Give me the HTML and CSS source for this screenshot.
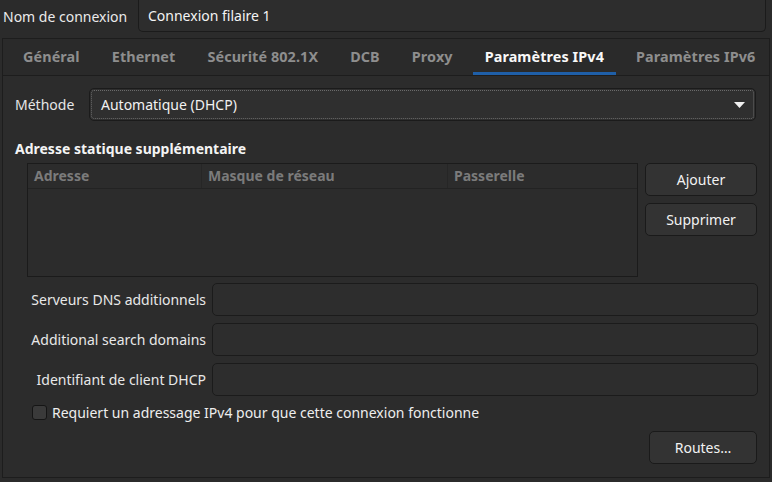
FILE: index.html
```html
<!DOCTYPE html>
<html lang="fr">
<head>
<meta charset="utf-8">
<link rel="stylesheet" href="styles.css">
</head>
<body>
<div class="top">
  <span class="top-label">Nom de connexion</span>
  <div class="top-entry">Connexion filaire 1</div>
</div>
<div class="notebook">
  <div class="tabs">
    <div class="tab">Général</div>
    <div class="tab">Ethernet</div>
    <div class="tab">Sécurité 802.1X</div>
    <div class="tab">DCB</div>
    <div class="tab">Proxy</div>
    <div class="tab active">Paramètres IPv4</div>
    <div class="tab">Paramètres IPv6</div>
  </div>
  <div class="page">
    <div class="method-row">
      <span class="label">Méthode</span>
      <div class="combo">
        <span>Automatique (DHCP)</span>
        <svg class="arrow" width="11" height="6" viewBox="0 0 11 6"><path d="M0 0h11L5.5 6z" fill="#f0f0f0"/></svg>
      </div>
    </div>
    <div class="heading">Adresse statique supplémentaire</div>
    <div class="table-row">
      <div class="table">
        <div class="thead">
          <div class="th c1">Adresse</div>
          <div class="th c2">Masque de réseau</div>
          <div class="th c3">Passerelle</div>
        </div>
      </div>
      <div class="side-buttons">
        <div class="btn">Ajouter</div>
        <div class="btn">Supprimer</div>
      </div>
    </div>
    <div class="fields">
      <span class="flabel">Serveurs DNS additionnels</span><div class="entry"></div>
      <span class="flabel">Additional search domains</span><div class="entry"></div>
      <span class="flabel">Identifiant de client DHCP</span><div class="entry"></div>
    </div>
    <div class="check-row">
      <span class="check"></span>
      <span class="check-label">Requiert un adressage IPv4 pour que cette connexion fonctionne</span>
    </div>
    <div class="bottom-row">
      <div class="btn routes">Routes…</div>
    </div>
  </div>
</div>
</body>
</html>
```
FILE: styles.css
```css
html, body {
  margin: 0;
  padding: 0;
}
body {
  background: #2b2b2b;
  color: #f2f2f2;
  font-family: "Noto Sans", "Open Sans", sans-serif;
  font-size: 14px;
  width: 772px;
  height: 482px;
  overflow: hidden;
}
.top {
  display: flex;
  align-items: center;
  height: 32px;
}
.top-label {
  padding-left: 3px;
  width: 135px;
  color: #eaeaea;
}
.top-entry {
  flex: 1;
  height: 32px;
  box-sizing: border-box;
  margin-right: 6px;
  border: 1px solid #1b1b1b;
  border-top: none;
  border-radius: 0 0 5px 5px;
  background: #2d2d2d;
  display: flex;
  align-items: center;
  padding-left: 9px;
  color: #f4f4f4;
}
.notebook {
  margin: 6px 2px 0 2px;
  height: 440px;
  box-sizing: border-box;
  border: 1px solid #1d1d1d;
  background: #2c2c2c;
}
.tabs {
  display: flex;
  height: 37px;
  box-sizing: border-box;
  border-bottom: 1px solid #1d1d1d;
  padding-left: 4px;
  background: #2a2a2a;
  white-space: nowrap;
  overflow: hidden;
}
.tab {
  margin: 0 4px;
  padding: 0 12px;
  font-weight: bold;
  font-size: 14.4px;
  letter-spacing: 0.1px;
  color: #8e8e8e;
  display: flex;
  align-items: center;
  box-sizing: border-box;
  border-bottom: 3px solid transparent;
  padding-top: 2px;
}
.tab.active {
  color: #f8f8f8;
  border-bottom-color: #1f5fa8;
}
.page {
  padding: 12px 12px 0 12px;
}
.method-row {
  display: flex;
  align-items: center;
  height: 33px;
}
.label {
  width: 74px;
  color: #e6e6e6;
}
.combo {
  flex: 1;
  height: 33px;
  box-sizing: border-box;
  margin-right: 1px;
  border: 1px solid #1b1b1b;
  border-radius: 5px;
  background: #2f2f2f;
  outline: 1px dotted #6a6a6a;
  outline-offset: -3px;
  display: flex;
  align-items: center;
  justify-content: space-between;
  padding: 0 10px 0 11px;
}
.arrow {
  display: block;
}
.heading {
  font-weight: bold;
  margin-top: 18px;
  height: 20px;
  line-height: 20px;
  color: #f4f4f4;
}
.table-row {
  display: flex;
  align-items: flex-start;
  margin-top: 4px;
}
.table {
  margin-left: 12px;
  width: 612px;
  height: 114px;
  box-sizing: border-box;
  border: 1px solid #1b1b1b;
  background: #2c2c2c;
}
.thead {
  display: flex;
  height: 25px;
  box-sizing: border-box;
  border-bottom: 1px solid #232323;
}
.th {
  font-weight: bold;
  color: #7b7b7b;
  padding-left: 6px;
  line-height: 24px;
  box-sizing: border-box;
  border-right: 1px solid #262626;
}
.c1 { width: 174px; }
.c2 { width: 246px; }
.c3 { flex: 1; border-right: none; }
.side-buttons {
  display: flex;
  flex-direction: column;
  gap: 7px;
  margin-left: 7px;
}
.btn {
  width: 112px;
  height: 33px;
  box-sizing: border-box;
  border: 1px solid #1a1a1a;
  border-radius: 5px;
  background: #333333;
  display: flex;
  align-items: center;
  justify-content: center;
  color: #f2f2f2;
}
.fields {
  display: grid;
  grid-template-columns: 191px 546px;
  column-gap: 6px;
  row-gap: 7px;
  margin-top: 6px;
  align-items: center;
}
.flabel {
  text-align: right;
  color: #e8e8e8;
}
.entry {
  height: 33px;
  box-sizing: border-box;
  border: 1px solid #1b1b1b;
  border-radius: 5px;
  background: #2d2d2d;
}
.check-row {
  display: flex;
  align-items: center;
  margin-top: 7px;
  margin-left: 17px;
  height: 18px;
}
.check {
  width: 15px;
  height: 15px;
  box-sizing: border-box;
  border: 1px solid #151515;
  border-radius: 3px;
  background: #3a3a3a;
  margin-right: 5px;
}
.check-label {
  color: #eeeeee;
}
.bottom-row {
  display: flex;
  justify-content: flex-end;
  margin-top: 10px;
}
.btn.routes {
  width: 108px;
}
```
